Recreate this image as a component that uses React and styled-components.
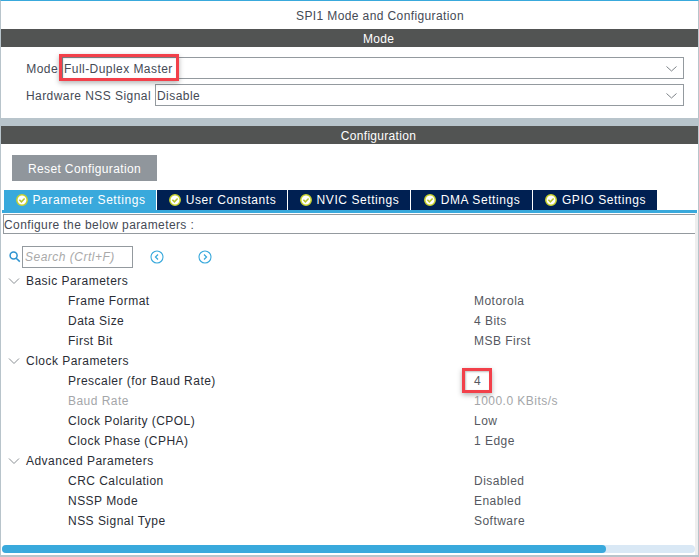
import React from "react";
import styled, { createGlobalStyle } from "styled-components";

const Global = createGlobalStyle`
  html, body { margin: 0; padding: 0; background: #fff; }
  body { font-family: "Liberation Sans", Arial, sans-serif; font-size: 13px; color: #454a55; }
`;

const Page = styled.div`
  width: 699px;
  height: 557px;
  box-sizing: border-box;
  position: relative;
  overflow: hidden;
  border-top: 1px solid #39a9dc;
  border-left: 1px solid #b8c4cb;
  border-right: 1px solid #b8c4cb;
  border-bottom: 2px solid #b8c4cb;
  display: flex;
  flex-direction: column;
`;
const Title = styled.div`
  height: 28px;
  line-height: 30px;
  text-align: center;
  padding-left: 61px;
  font-size: 12px;
  letter-spacing: 0.39px;
`;
const SectionBar = styled.div`
  height: 18px;
  line-height: 20px;
  background: #525453;
  color: #fff;
  text-align: center;
  padding-left: 58px;
  font-size: 12px;
  letter-spacing: 0.3px;
`;
const ModeBody = styled.div`
  height: 71px;
  box-sizing: border-box;
  padding: 10px 14px 0 0;
  display: flex;
  flex-direction: column;
  gap: 5px;
`;
const Field = styled.div`
  display: flex;
  align-items: center;
  height: 22px;
`;
const FieldLabel = styled.div`
  width: ${(p) => p.$w}px;
  flex: none;
  box-sizing: border-box;
  text-align: right;
  padding-right: 4px;
  padding-top: 1px;
  font-size: 12px;
  letter-spacing: 0.44px;
  white-space: nowrap;
`;
const Select = styled.div`
  flex: 1;
  height: 22px;
  box-sizing: border-box;
  border: 1px solid #949a9f;
  display: flex;
  align-items: center;
  justify-content: space-between;
  padding: 1px 6px 0 1px;
  font-size: 12px;
  letter-spacing: 0.45px;
`;
const Band = styled.div`
  height: 8px;
  background: #b8c4cb;
`;
const ConfigBody = styled.div`
  flex: 1;
  min-height: 0;
  display: flex;
  flex-direction: column;
`;
const ResetButton = styled.button`
  align-self: flex-start;
  margin: 11px 0 9px 11px;
  width: 145px;
  height: 26px;
  border: 0;
  padding: 1px 0 0;
  background: #90969c;
  color: #fff;
  font: 12px "Liberation Sans", Arial, sans-serif;
  letter-spacing: 0.37px;
`;
const TabBar = styled.div`
  display: flex;
  gap: 1px;
  padding-left: 3px;
  height: 20px;
`;
const Tab = styled.div`
  width: ${(p) => p.$w}px;
  box-sizing: border-box;
  background: ${(p) => (p.$active ? "#39a9dc" : "#002052")};
  color: #fff;
  display: flex;
  align-items: center;
  justify-content: center;
  gap: 5px;
  padding-left: 1px;
  font-size: 12px;
  letter-spacing: 0.57px;
  white-space: nowrap;
`;
const TabRule = styled.div`
  height: 3px;
  margin-left: 1px;
  margin-right: 1px;
  background: #39a9dc;
`;
const Hint = styled.div`
  height: 20px;
  box-sizing: border-box;
  margin: 1px 3px 0 2px;
  border: 1px solid #949a9f;
  border-right: 0;
  line-height: 20px;
  font-size: 12px;
  letter-spacing: 0.4px;
`;
const SearchRow = styled.div`
  display: flex;
  align-items: center;
  height: 22px;
  margin-top: 12px;
  padding-left: 8px;
`;
const SearchIconWrap = styled.svg`
  width: 12px;
  height: 12px;
  margin-right: 1px;
  flex: none;
`;
const SearchInput = styled.div`
  width: 111px;
  height: 22px;
  box-sizing: border-box;
  border: 1px solid #949a9f;
  padding-left: 2px;
  line-height: 21px;
  font-size: 12px;
  font-style: italic;
  letter-spacing: 0.5px;
  color: #a9a9a9;
`;
const NavIcon = styled.svg`
  width: 14px;
  height: 14px;
  margin-left: ${(p) => p.$gap}px;
  flex: none;
`;
const Tree = styled.div`
  margin-top: 3px;
  display: flex;
  flex-direction: column;
`;
const Row = styled.div`
  height: 20px;
  display: flex;
  align-items: center;
  font-size: 12px;
  letter-spacing: 0.47px;
  color: ${(p) => (p.$disabled ? "#a4a6a9" : "#2a2d35")};
`;
const GroupChevron = styled.svg`
  width: 12px;
  height: 12px;
  margin-left: 7px;
  margin-right: 6px;
  flex: none;
`;
const RowName = styled.div`
  width: 406px;
  margin-left: 67px;
  flex: none;
`;
const RowValue = styled.div`
  color: ${(p) => (p.$disabled ? "#a4a6a9" : "#555860")};
`;
const SideTrack = styled.div`
  position: absolute;
  right: 0;
  top: 212px;
  bottom: 0;
  width: 3px;
  background: #eeeeee;
`;
const ScrollTrack = styled.div`
  position: absolute;
  left: 1px;
  right: 3px;
  top: 544px;
  height: 8px;
  border-radius: 4px;
  background: #d9e8f5;
`;
const ScrollThumb = styled.div`
  height: 100%;
  border-radius: 4px;
  background: #39a9dc;
`;
const Callout = styled.div`
  position: absolute;
  left: ${(p) => p.$x}px;
  top: ${(p) => p.$y}px;
  width: ${(p) => p.$w}px;
  height: ${(p) => p.$h}px;
  box-sizing: border-box;
  border: 3px solid #f2404a;
  box-shadow: 0 2px 5px rgba(0, 0, 0, 0.3), inset 1px 1px 2px rgba(0, 0, 0, 0.25);
`;

const Chevron = () => (
  <svg width="11" height="6" viewBox="0 0 11 6" fill="none" stroke="#7d8288" strokeWidth="1">
    <path d="M0.5 0.5 L5.5 5 L10.5 0.5" />
  </svg>
);
const Check = () => (
  <svg width="12" height="12" viewBox="0 0 12 12" fill="none">
    <circle cx="6" cy="6" r="5.2" fill="#fff" stroke="#c8d22c" strokeWidth="1.5" />
    <path d="M3.4 5.8 L5.4 7.8 L8.6 4.4" stroke="#b9c42a" strokeWidth="1.5" />
  </svg>
);
const SearchIcon = () => (
  <SearchIconWrap viewBox="0 0 12 12" fill="none" stroke="#2d93d0" strokeWidth="1.5">
    <circle cx="4.6" cy="4.6" r="3.5" />
    <path d="M7.2 7.2 L10.8 10.6" />
  </SearchIconWrap>
);
const Nav = ({ dir, gap }) => (
  <NavIcon $gap={gap} viewBox="0 0 14 14" fill="none" stroke="#39a9dc" strokeWidth="1.1">
    <circle cx="7" cy="7" r="6" />
    <path d={dir === "left" ? "M8 4.5 L5.5 7 L8 9.5" : "M6 4.5 L8.5 7 L6 9.5"} strokeWidth="1.3" />
  </NavIcon>
);

const tabs = [
  ["Parameter Settings", 152, true],
  ["User Constants", 130],
  ["NVIC Settings", 122],
  ["DMA Settings", 121],
  ["GPIO Settings", 124],
];
const tree = [
  { group: "Basic Parameters" },
  { name: "Frame Format", value: "Motorola" },
  { name: "Data Size", value: "4 Bits" },
  { name: "First Bit", value: "MSB First" },
  { group: "Clock Parameters" },
  { name: "Prescaler (for Baud Rate)", value: "4" },
  { name: "Baud Rate", value: "1000.0 KBits/s", disabled: true },
  { name: "Clock Polarity (CPOL)", value: "Low" },
  { name: "Clock Phase (CPHA)", value: "1 Edge" },
  { group: "Advanced Parameters" },
  { name: "CRC Calculation", value: "Disabled" },
  { name: "NSSP Mode", value: "Enabled" },
  { name: "NSS Signal Type", value: "Software" },
];

export default function App() {
  return (
    <Page>
      <Global />
      <Title>SPI1 Mode and Configuration</Title>
      <SectionBar>Mode</SectionBar>
      <ModeBody>
        <Field>
          <FieldLabel $w={61}>Mode</FieldLabel>
          <Select>Full-Duplex Master<Chevron /></Select>
        </Field>
        <Field>
          <FieldLabel $w={154}>Hardware NSS Signal</FieldLabel>
          <Select>Disable<Chevron /></Select>
        </Field>
      </ModeBody>
      <Band />
      <SectionBar>Configuration</SectionBar>
      <ConfigBody>
        <ResetButton>Reset Configuration</ResetButton>
        <TabBar>
          {tabs.map(([label, w, active]) => (
            <Tab key={label} $w={w} $active={active}><Check />{label}</Tab>
          ))}
        </TabBar>
        <TabRule />
        <Hint>Configure the below parameters :</Hint>
        <SearchRow>
          <SearchIcon />
          <SearchInput>Search (Crtl+F)</SearchInput>
          <Nav dir="left" gap={17} />
          <Nav dir="right" gap={34} />
        </SearchRow>
        <Tree>
          {tree.map((r) =>
            r.group ? (
              <Row key={r.group}>
                <GroupChevron viewBox="0 0 12 12" fill="none" stroke="#8a8f94" strokeWidth="1">
                  <path d="M1 3.5 L6 8.5 L11 3.5" />
                </GroupChevron>
                {r.group}
              </Row>
            ) : (
              <Row key={r.name} $disabled={r.disabled}>
                <RowName>{r.name}</RowName>
                <RowValue $disabled={r.disabled}>{r.value}</RowValue>
              </Row>
            )
          )}
        </Tree>
      </ConfigBody>
      <SideTrack />
      <ScrollTrack>
        <ScrollThumb style={{ width: `${(604 / 693) * 100}%` }} />
      </ScrollTrack>
      <Callout $x={58} $y={53} $w={120} $h={27} />
      <Callout $x={461} $y={367} $w={30} $h={25} />
    </Page>
  );
}
